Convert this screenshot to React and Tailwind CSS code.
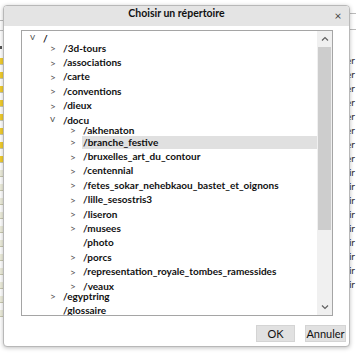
import React from "react";

const rows = [
  { level: 0, text: "/", caret: "open" },
  { level: 1, text: "/3d-tours", caret: "closed", mt: "mt-[-4.4px]" },
  { level: 1, text: "/associations", caret: "closed" },
  { level: 1, text: "/carte", caret: "closed" },
  { level: 1, text: "/conventions", caret: "closed" },
  { level: 1, text: "/dieux", caret: "closed" },
  { level: 1, text: "/docu", caret: "open" },
  { level: 2, text: "/akhenaton", caret: "closed", mt: "mt-[-4.4px]" },
  { level: 2, text: "/branche_festive", caret: "closed", mt: "mt-[-2.4px]", selected: true },
  { level: 2, text: "/bruxelles_art_du_contour", caret: "closed" },
  { level: 2, text: "/centennial", caret: "closed" },
  { level: 2, text: "/fetes_sokar_nehebkaou_bastet_et_oignons", caret: "closed" },
  { level: 2, text: "/lille_sesostris3", caret: "closed" },
  { level: 2, text: "/liseron", caret: "closed" },
  { level: 2, text: "/musees", caret: "closed" },
  { level: 2, text: "/photo" },
  { level: 2, text: "/porcs", caret: "closed" },
  { level: 2, text: "/representation_royale_tombes_ramessides", caret: "closed" },
  { level: 2, text: "/veaux", caret: "closed" },
  { level: 1, text: "/egyptring", caret: "closed", mt: "mt-[-4.4px]" },
  { level: 1, text: "/glossaire" },
];

const indent = ["pl-[8px]", "pl-[28px]", "pl-[48px]"];

function Row({ row }) {
  return (
    <div className={`flex h-[14.4px] items-center ${indent[row.level]} ${row.mt || ""}`}>
      <span className="w-[12px] shrink-0 text-[10px] font-normal leading-[8px] text-[#555]">
        {row.caret === "open" ? (
          <span className="relative top-[-2px]">v</span>
        ) : row.caret === "closed" ? (
          ">"
        ) : (
          ""
        )}
      </span>
      <span
        className={`flex flex-1 items-center whitespace-nowrap pl-[1px] leading-[9px] ${
          row.selected ? "h-[13px] bg-[#e0e0e0]" : "h-[9px]"
        }`}
      >
        {row.text}
      </span>
    </div>
  );
}

function App() {
  const cells = [
    "bg-[#f2cd2e]", "bg-[#f2cd2e]", "bg-[#f2cd2e]", "bg-[#f2cd2e]", "bg-[#f2cd2e]",
    "bg-[#f2cd2e]", "bg-[#f2cd2e]", "bg-[#f2cd2e]", "bg-[#eeeedd]", "bg-[#eeeedd]",
    "bg-[#eeeedd]", "bg-[#eeeedd]", "bg-[#eeeedd]", "bg-[#eeeedd]", "bg-[#eeeedd]",
    "bg-[#eeeedd]", "bg-[#eeeedd]", "bg-[#eeeedd]", "bg-[#eeeedd]",
  ];
  const words = [
    "Lister", "Lister", "Lister", "Lister", "Lister", "Lister", "Lister", "Lister",
    "Voir", "Voir", "Voir", "Voir", "Voir", "Voir", "Voir", "Voir", "Voir",
  ];
  return (
    <div
      className="relative flex h-[354px] w-[356px] overflow-hidden bg-white"
      style={{ fontFamily: "Lato, 'Open Sans', sans-serif" }}
    >
      {/* page behind the dialog */}
      <div className="flex w-[4px] flex-col">
        <div className="mt-[20px] h-[11px] border-y border-[#bbb]" />
        <div className="mt-[15px] h-[3px] w-[2px] bg-[#555]" />
        <div className="mt-[9px] flex flex-col gap-[7px]">
          {cells.map((c, i) => (
            <div key={i} className={`h-[7px] w-[3px] border-b border-[#c9c9b0] ${c}`} />
          ))}
        </div>
      </div>
      <div className="flex-1" />
      <div className="flex w-[40px] flex-col items-end">
        <div className="mt-[13px] h-[17px] w-full border-y border-[#bbb]" />
        <div className="mt-[23px] flex w-full flex-col items-end border-l border-[#ccc] text-[10px] leading-[14px] text-[#333]">
          {words.map((w, i) => (
            <div key={i} className="pr-[1px]">
              {w}
            </div>
          ))}
        </div>
      </div>

      {/* dialog, lying over the page */}
      <div className="absolute left-[3px] top-[5px] flex h-[342px] w-[347px] flex-col overflow-hidden rounded-[4px] border border-[#b8b8b8] bg-white shadow-[0_1px_4px_rgba(0,0,0,0.25)]">
        <div className="flex h-[20px] shrink-0 items-center bg-[#e4e4e4] text-[#111]">
          <div className="w-[20px]" />
          <div className="flex-1 pb-[4px] text-center text-[10.5px] font-bold">Choisir un répertoire</div>
          <div className="w-[20px] pr-[2px] text-center text-[12px] text-[#444]">×</div>
        </div>

        <div className="ml-[17px] mt-[4px] flex h-[286px] w-[312px] border border-[#a5a5a5]">
          <div className="flex-1 overflow-hidden text-[10px] font-bold text-[#111]">
            {rows.map((r) => (
              <Row key={r.text} row={r} />
            ))}
          </div>
          <div className="flex w-[15px] shrink-0 flex-col bg-[#f0f0f0]">
            <div className="flex h-[15px] items-center justify-center">
              <svg width="8" height="5" viewBox="0 0 8 5">
                <path d="M1 4.5 L4 1.5 L7 4.5" fill="none" stroke="#606060" strokeWidth="1.2" />
              </svg>
            </div>
            <div className="mx-[1px] mt-px h-[183px] bg-[#cdcdcd]" />
            <div className="flex-1" />
            <div className="flex h-[15px] items-center justify-center">
              <svg width="8" height="5" viewBox="0 0 8 5">
                <path d="M1 0.5 L4 3.5 L7 0.5" fill="none" stroke="#606060" strokeWidth="1.2" />
              </svg>
            </div>
          </div>
        </div>

        <div className="mt-[9px] flex justify-end gap-[10px] pr-[3px]">
          <button className="h-[17px] w-[39px] border border-[#d4d4d4] bg-[#e1e1e1] text-[11px] leading-[15px] text-[#111]">
            OK
          </button>
          <button className="h-[17px] w-[41px] border border-[#d4d4d4] bg-[#e1e1e1] text-[11px] leading-[15px] text-[#111]">
            Annuler
          </button>
        </div>
      </div>
    </div>
  );
}

export default App;
